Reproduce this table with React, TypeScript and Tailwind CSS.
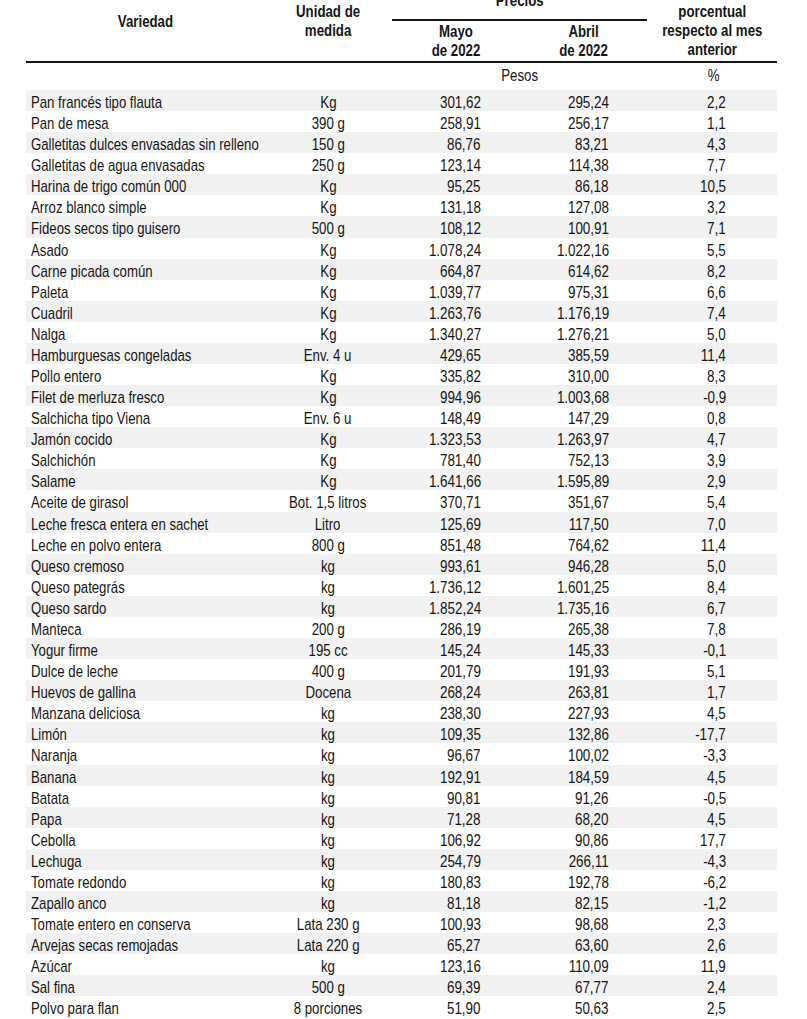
import React from "react";

type Row = [string, string, string, string, string];

const rows: Row[] = [
  ["Pan francés tipo flauta", "Kg", "301,62", "295,24", "2,2"],
  ["Pan de mesa", "390 g", "258,91", "256,17", "1,1"],
  ["Galletitas dulces envasadas sin relleno", "150 g", "86,76", "83,21", "4,3"],
  ["Galletitas de agua envasadas", "250 g", "123,14", "114,38", "7,7"],
  ["Harina de trigo común 000", "Kg", "95,25", "86,18", "10,5"],
  ["Arroz blanco simple", "Kg", "131,18", "127,08", "3,2"],
  ["Fideos secos tipo guisero", "500 g", "108,12", "100,91", "7,1"],
  ["Asado", "Kg", "1.078,24", "1.022,16", "5,5"],
  ["Carne picada común", "Kg", "664,87", "614,62", "8,2"],
  ["Paleta", "Kg", "1.039,77", "975,31", "6,6"],
  ["Cuadril", "Kg", "1.263,76", "1.176,19", "7,4"],
  ["Nalga", "Kg", "1.340,27", "1.276,21", "5,0"],
  ["Hamburguesas congeladas", "Env. 4 u", "429,65", "385,59", "11,4"],
  ["Pollo entero", "Kg", "335,82", "310,00", "8,3"],
  ["Filet de merluza fresco", "Kg", "994,96", "1.003,68", "-0,9"],
  ["Salchicha tipo Viena", "Env. 6 u", "148,49", "147,29", "0,8"],
  ["Jamón cocido", "Kg", "1.323,53", "1.263,97", "4,7"],
  ["Salchichón", "Kg", "781,40", "752,13", "3,9"],
  ["Salame", "Kg", "1.641,66", "1.595,89", "2,9"],
  ["Aceite de girasol", "Bot. 1,5 litros", "370,71", "351,67", "5,4"],
  ["Leche fresca entera en sachet", "Litro", "125,69", "117,50", "7,0"],
  ["Leche en polvo entera", "800 g", "851,48", "764,62", "11,4"],
  ["Queso cremoso", "kg", "993,61", "946,28", "5,0"],
  ["Queso pategrás", "kg", "1.736,12", "1.601,25", "8,4"],
  ["Queso sardo", "kg", "1.852,24", "1.735,16", "6,7"],
  ["Manteca", "200 g", "286,19", "265,38", "7,8"],
  ["Yogur firme", "195 cc", "145,24", "145,33", "-0,1"],
  ["Dulce de leche", "400 g", "201,79", "191,93", "5,1"],
  ["Huevos de gallina", "Docena", "268,24", "263,81", "1,7"],
  ["Manzana deliciosa", "kg", "238,30", "227,93", "4,5"],
  ["Limón", "kg", "109,35", "132,86", "-17,7"],
  ["Naranja", "kg", "96,67", "100,02", "-3,3"],
  ["Banana", "kg", "192,91", "184,59", "4,5"],
  ["Batata", "kg", "90,81", "91,26", "-0,5"],
  ["Papa", "kg", "71,28", "68,20", "4,5"],
  ["Cebolla", "kg", "106,92", "90,86", "17,7"],
  ["Lechuga", "kg", "254,79", "266,11", "-4,3"],
  ["Tomate redondo", "kg", "180,83", "192,78", "-6,2"],
  ["Zapallo anco", "kg", "81,18", "82,15", "-1,2"],
  ["Tomate entero en conserva", "Lata 230 g", "100,93", "98,68", "2,3"],
  ["Arvejas secas remojadas", "Lata 220 g", "65,27", "63,60", "2,6"],
  ["Azúcar", "kg", "123,16", "110,09", "11,9"],
  ["Sal fina", "500 g", "69,39", "67,77", "2,4"],
  ["Polvo para flan", "8 porciones", "51,90", "50,63", "2,5"],
];

const font = {
  fontFamily: '"Liberation Sans", Arial, sans-serif',
};

function L({ children }: { children: React.ReactNode }) {
  return <span className="inline-block whitespace-nowrap scale-x-[0.775] origin-left">{children}</span>;
}
function C({ children }: { children: React.ReactNode }) {
  return <span className="inline-block whitespace-nowrap scale-x-[0.78] origin-center">{children}</span>;
}
function R({ children }: { children: React.ReactNode }) {
  return <span className="inline-block whitespace-nowrap scale-x-[0.79] origin-right">{children}</span>;
}

export default function App() {
  return (
    <div className="w-[807px] h-[1019px] overflow-hidden bg-white text-[#161616]" style={font}>
      <div className="ml-[26px] w-[751px]">
        {/* header */}
        <div className="mt-[-17px] h-[80px] grid grid-cols-[238px_128px_255px_130px] border-b-2 border-[#161616] text-[17px] font-bold leading-[19px]">
          <div className="flex items-center justify-center pb-[2px]">
            <C>Variedad</C>
          </div>
          <div className="flex items-center justify-center pb-[2px]">
            <C>
              <span className="flex flex-col items-center">
                <span>Unidad de</span>
                <span>medida</span>
              </span>
            </C>
          </div>
          <div className="flex flex-col pt-[8px]">
            <div className="h-[19px] text-center">
              <C>Precios</C>
            </div>
            <div className="mt-[9px] border-t-2 border-[#161616]" />
            <div className="mt-[1px] grid grid-cols-[128px_127px] text-center">
              <C>
                <span className="flex flex-col items-center">
                  <span>Mayo</span>
                  <span>de 2022</span>
                </span>
              </C>
              <C>
                <span className="flex flex-col items-center">
                  <span>Abril</span>
                  <span>de 2022</span>
                </span>
              </C>
            </div>
          </div>
          <div className="flex items-center justify-center pb-[2px]">
            <C>
              <span className="flex flex-col items-center">
                <span>Variación</span>
                <span>porcentual</span>
                <span>respecto al mes</span>
                <span>anterior</span>
              </span>
            </C>
          </div>
        </div>
        {/* units row */}
        <div className="h-[27px] pt-[2px] grid grid-cols-[366px_255px_130px] items-start text-[17px] leading-[21px]">
          <div />
          <div className="text-center">
            <C>Pesos</C>
          </div>
          <div className="text-center pl-[4px]">
            <C>%</C>
          </div>
        </div>
        {/* data rows */}
        {rows.map((r, i) => (
          <div
            key={i}
            className={
              "h-[21.09px] pt-[2px] grid grid-cols-[238px_128px_128px_127px_130px] items-start text-[17px] leading-[21px] " +
              (i % 2 === 0 ? "bg-[#f1f1f1]" : "bg-white")
            }
          >
            <div className="pl-[5px]">
              <L>{r[0]}</L>
            </div>
            <div className="text-center">
              <C>{r[1]}</C>
            </div>
            <div className="text-right pr-[39px]">
              <R>{r[2]}</R>
            </div>
            <div className="text-right pr-[38px]">
              <R>{r[3]}</R>
            </div>
            <div className="text-right pr-[51px]">
              <R>{r[4]}</R>
            </div>
          </div>
        ))}
      </div>
    </div>
  );
}
